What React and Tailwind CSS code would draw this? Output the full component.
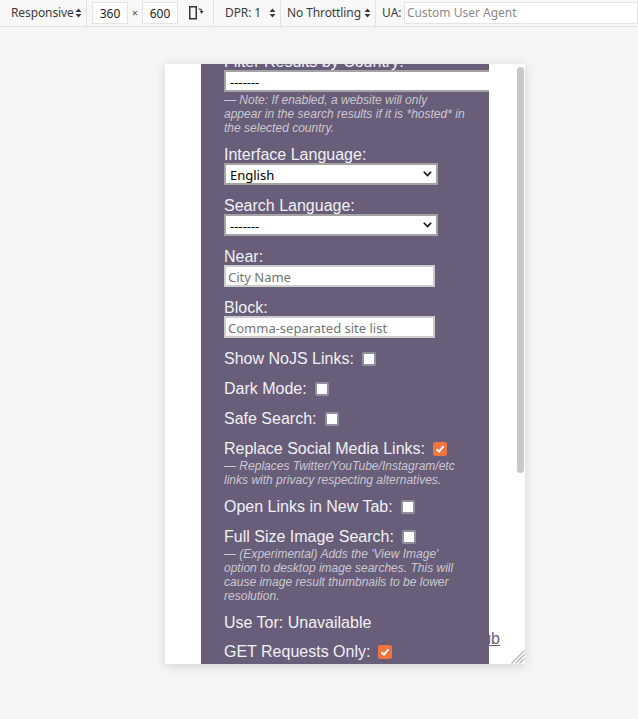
import React from "react";

const ui = { fontFamily: '"Noto Sans", "Open Sans", sans-serif' };
const sans = { fontFamily: '"Liberation Sans", Arial, sans-serif' };

function Updown() {
  return (
    <svg width="7" height="10" viewBox="0 0 7 10" className="shrink-0" fill="#3d3d3d">
      <path d="M3.5 0.5 L6.5 4 H0.5 Z" />
      <path d="M3.5 9.5 L6.5 6 H0.5 Z" />
    </svg>
  );
}

function Divider() {
  return <div className="w-px h-[26px] bg-[#e2e2e2] shrink-0" />;
}

function Toolbar() {
  return (
    <div style={ui} className="h-[27px] flex items-start bg-[#f8f8f8] border-b border-[#e2e2e2] text-[12px] text-[#3c3c3c] overflow-hidden">
      <div className="flex items-center gap-[1px] h-[26px] pl-[11px] w-[86px]">
        <span className="tracking-[-0.1px]">Responsive</span>
        <Updown />
      </div>
      <Divider />
      <div className="flex items-center h-[26px] pl-[5px] w-[126px]">
        <input readOnly value="360" className="w-[36px] h-[22px] border border-[#e4e4e4] bg-white text-center text-[12px] text-[#222] outline-none" />
        <span className="w-[14px] text-center text-[11px] text-[#555]">×</span>
        <input readOnly value="600" className="w-[36px] h-[22px] border border-[#e4e4e4] bg-white text-center text-[12px] text-[#222] outline-none" />
        <svg width="15" height="14" viewBox="0 0 15 14" className="ml-[11px]" fill="none" stroke="#333">
          <rect x="0.75" y="0.75" width="6.5" height="12" strokeWidth="1.5" />
          <path d="M9.5 3.2 C11 2.8 12.4 3.2 12.6 5" strokeWidth="1.1" />
          <path d="M10.6 5 H14.6 L12.6 7.8 Z" fill="#333" stroke="none" />
        </svg>
      </div>
      <Divider />
      <div className="flex items-center h-[26px] pl-[11px] w-[66px]">
        <span className="w-[44px] tracking-[-0.1px]">DPR: 1</span>
        <Updown />
      </div>
      <Divider />
      <div className="flex items-center gap-[3px] h-[26px] pl-[6px] w-[94px]">
        <span className="tracking-[-0.1px]">No Throttling</span>
        <Updown />
      </div>
      <Divider />
      <div className="flex items-center h-[26px] pl-[6px] flex-1">
        <span className="w-[22px]">UA:</span>
        <input placeholder="Custom User Agent" className="flex-1 h-[22px] border border-[#e4e4e4] bg-white px-[2px] pb-[1px] text-[12px] outline-none placeholder:text-[#8a8a8a]" />
      </div>
    </div>
  );
}

function Check({ checked }) {
  return (
    <span className={checked
      ? "relative inline-flex w-[14px] h-[14px] rounded-[2px] bg-[#f1743f] items-center justify-center"
      : "relative inline-block w-[14px] h-[14px] rounded-[2px] bg-white border-[2px] border-[#8f8f9d]"}>
      {checked && (
        <svg width="10" height="10" viewBox="0 0 10 10" fill="none" stroke="#fff" strokeWidth="2">
          <path d="M1.5 5.2 L4 7.6 L8.6 2.2" />
        </svg>
      )}
    </span>
  );
}

function Row({ label, checked, className = "mt-[12px]" }) {
  return (
    <div className={`flex items-center h-[18px] gap-[8px] ${className}`}>
      <label>{label}</label>
      <Check checked={checked} />
    </div>
  );
}

function Note({ children }) {
  return (
    <div className="text-[12px] leading-[14px] italic text-[#cbc7d0] mt-[1px] mb-[-1px] w-[241px] tracking-[0.01px]">
      {children}
    </div>
  );
}

function Field({ label, children, className = "mt-[11px]" }) {
  return (
    <div className={className}>
      <label className="block h-[18px] pt-[1px]">{label}</label>
      {children}
    </div>
  );
}

function Select({ value, wide }) {
  return (
    <div className={wide ? "relative w-[300px] h-[22px]" : "relative w-[214px] h-[22px]"}>
      <select style={ui} defaultValue={value} className="block appearance-none w-full h-[22px] border-2 border-[#a3a3a3] bg-white pl-[4px] pt-[1px] text-[13px] text-black">
        <option value={value}>{value === "en" ? "English" : "-------"}</option>
      </select>
      {!wide && (
        <svg width="9" height="6" viewBox="0 0 9 6" fill="none" stroke="#111" strokeWidth="1.6" className="absolute left-[199px] top-[8px] pointer-events-none">
          <path d="M0.8 0.8 L4.5 4.5 L8.2 0.8" />
        </svg>
      )}
    </div>
  );
}

const inputCls = "block w-[211px] h-[22px] border-2 border-[#cccccc] bg-white px-[2px] pt-[1px] text-[13px] text-black outline-none placeholder:text-[#757575]";

export default function App() {
  return (
    <div className="w-[638px] h-[719px] bg-[#f5f5f5] overflow-hidden">
      <Toolbar />
      <div className="relative ml-[165px] mt-[37px] w-[360px] h-[600px] bg-white overflow-hidden shadow-[0_2px_10px_rgba(0,0,0,0.14)]">
        <a style={sans} className="absolute right-[25px] top-[563px] text-[16px] text-[#685e79] underline">GitHub</a>
        <div style={sans} className="relative ml-[36px] w-[288px] h-[600px] bg-[#685e79] overflow-hidden pl-[23px] text-[16px] leading-[18px] text-[#f1f0f5]">
          <div className="mt-[-12px]">
            <Field label="Filter Results by Country:" className="">
              <Select value="" wide />
            </Field>
            <Note>— Note: If enabled, a website will only appear in the search results if it is *hosted* in the selected country.</Note>

            <Field label="Interface Language:">
              <Select value="en" />
            </Field>
            <Field label="Search Language:">
              <Select value="" />
            </Field>
            <Field label="Near:">
              <input style={ui} placeholder="City Name" className={inputCls} />
            </Field>
            <Field label="Block:">
              <input style={ui} placeholder="Comma-separated site list" className={inputCls} />
            </Field>

            <Row label="Show NoJS Links:" />
            <Row label="Dark Mode:" />
            <Row label="Safe Search:" />
            <Row label="Replace Social Media Links:" checked />
            <Note>— Replaces Twitter/YouTube/Instagram/etc links with privacy respecting alternatives.</Note>
            <Row label="Open Links in New Tab:" />
            <Row label="Full Size Image Search:" />
            <Note>— (Experimental) Adds the 'View Image' option to desktop image searches. This will cause image result thumbnails to be lower resolution.</Note>
            <div className="h-[18px] mt-[11px] pt-[1px]">Use Tor: Unavailable</div>
            <Row label="GET Requests Only:" checked />
          </div>
        </div>
        <div className="absolute left-[352px] top-[3px] w-[7px] h-[406px] rounded-full bg-[#c8c8c8]" />
        <svg width="14" height="14" viewBox="0 0 14 14" className="absolute right-0 bottom-0" stroke="#b4b4b4" strokeWidth="1.2">
          <path d="M13.5 0.5 L0.5 13.5 M13.5 4.5 L4.5 13.5 M13.5 8.5 L8.5 13.5" />
        </svg>
      </div>
    </div>
  );
}
